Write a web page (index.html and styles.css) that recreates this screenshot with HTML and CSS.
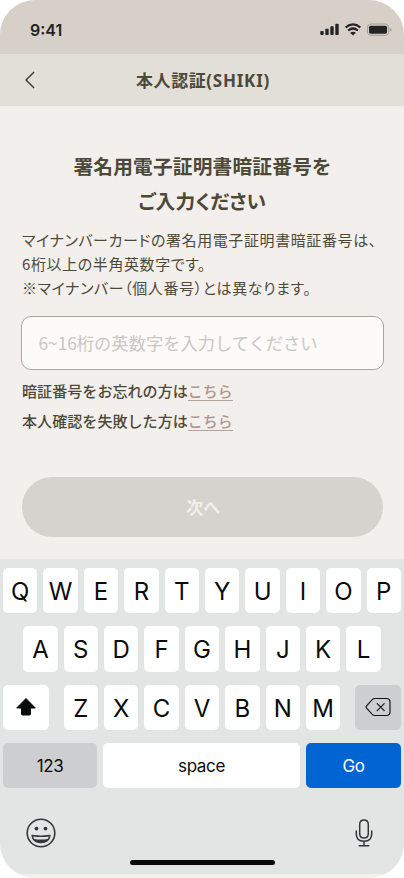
FILE: index.html
```html
<!DOCTYPE html>
<html lang="ja">
<head>
<meta charset="utf-8">
<title>本人認証(SHIKI)</title>
<link rel="stylesheet" href="styles.css">
</head>
<body>
<div class="phone">
  <div class="status">
    <span class="time">9:41</span>
    <svg class="status-icons" width="72" height="14" viewBox="0 0 72 14">
      <g fill="#242424">
        <rect x=".3" y="8" width="3.4" height="4" rx=".8"/>
        <rect x="5.3" y="5.8" width="3.4" height="6.2" rx=".8"/>
        <rect x="10.300" y="3.3" width="3.4" height="8.7" rx=".8"/>
        <rect x="15.300" y=".8" width="3.4" height="11.2" rx=".8"/>
        <path d="M33 8.800q1.700 0 2.900 1L33 12.500 30.100 9.800q1.200-1 2.900-1z"/>
        <rect x="49" y="2.700" width="18" height="8" rx="1.600"/>
      </g>
      <path d="M25.600 4.500q7.400-6.200 14.800 0M28.100 7.500q4.900-4 9.800 0" fill="none" stroke="#242424" stroke-width="2.200"/>
      <rect x="47.500" y="1" width="21" height="11.300" rx="3.200" fill="none" stroke="#a29d99" stroke-width="1"/>
      <path d="M69.700 4.700q1.800.6 1.800 2t-1.800 2z" fill="#a29d99"/>
    </svg>
  </div>
  <header class="nav">
    <svg class="back" width="12" height="18" viewBox="0 0 12 18"><path d="M9.600 1.500 2 9l7.600 7.500" fill="none" stroke="#4d4939" stroke-width="1.700" stroke-linecap="round" stroke-linejoin="round"/></svg>
    <h1>本人認証<span class="latin">(SHIKI)</span></h1>
  </header>
  <main>
    <h2>署名用電子証明書暗証番号を<br>ご入力ください</h2>
    <p class="lead">マイナンバーカードの署名用電子証明書暗証番号は、<br>6桁以上の半角英数字です。<br>※マイナンバー（個人番号）とは異なります。</p>
    <div class="field">6~16桁の英数字を入力してください</div>
    <div class="help">
      <div>暗証番号をお忘れの方は<a>こちら</a></div>
      <div>本人確認を失敗した方は<a>こちら</a></div>
    </div>
    <div class="next">次へ</div>
  </main>
  <section class="keyboard">
    <div class="row"><b>Q</b><b>W</b><b>E</b><b>R</b><b>T</b><b>Y</b><b>U</b><b>I</b><b>O</b><b>P</b></div>
    <div class="row"><b>A</b><b>S</b><b>D</b><b>F</b><b>G</b><b>H</b><b>J</b><b>K</b><b>L</b></div>
    <div class="row spread">
      <div class="key side"><svg width="22" height="20" viewBox="0 0 22 20"><path d="M11 1.500 20.300 11h-4.800v6q0 1-1 1h-7q-1 0-1-1v-6H1.700z" fill="#0a0c0b" stroke="#0a0c0b" stroke-linejoin="round"/></svg></div>
      <div class="row"><b>Z</b><b>X</b><b>C</b><b>V</b><b>B</b><b>N</b><b>M</b></div>
      <div class="key side gray"><svg width="26" height="20" viewBox="0 0 26 20"><path d="M9.500 1.500h12q3.500 0 3.500 3.500v10q0 3.500-3.500 3.500h-12q-1.200 0-2-.8L1.600 11.200q-1-1.200 0-2.400L7.500 2.300q.8-.8 2-.8zM12.200 6.600l7 7m0-7-7 7" fill="none" stroke="#151617" stroke-width="1.200" stroke-linecap="round"/></svg></div>
    </div>
    <div class="row wide"><div class="key num gray">123</div><div class="key space">space</div><div class="key go">Go</div></div>
    <div class="tools">
      <svg width="30" height="30" viewBox="0 0 30 30">
        <circle cx="15" cy="15" r="13.800" fill="none" stroke="#303638" stroke-width="1.600"/>
        <circle cx="10.500" cy="10.600" r="1.900" fill="#303638"/><circle cx="19.500" cy="10.600" r="1.900" fill="#303638"/>
        <path d="M5.800 17.200q9.200 1.800 18.400 0-.6 7.600-9.200 7.600t-9.200-7.600z" fill="#303638" stroke="#303638" stroke-linejoin="round"/>
        <path d="M7.200 18.400q7.800 1.400 15.600 0-.3 1.500-1.100 2.500-6.700 1.300-13.400 0-.8-1-1.100-2.500z" fill="#e2e5e4"/>
      </svg>
      <svg width="18" height="28" viewBox="0 0 18 28"><path d="M9 .9q4.300 0 4.300 4.500v9.200q0 4.500-4.300 4.500t-4.300-4.500V5.400Q4.700.9 9 .9zM1.300 12v3q0 7.200 7.700 7.200t7.700-7.200v-3M9 22.400v4.400M4.200 26.800h9.600" fill="none" stroke="#303638" stroke-width="1.500" stroke-linecap="round"/></svg>
    </div>
    <div class="home"></div>
  </section>
</div>
</body>
</html>
```
FILE: styles.css
```css
* { box-sizing: border-box; }
body { margin: 0; background: #fff; }
.phone {
  width: 404px; height: 878px; overflow: hidden;
  display: flex; flex-direction: column;
  border-radius: 35px; background: #f3efec; color: #4d4939;
  font-family: "Noto Sans CJK JP", sans-serif;
}
.status {
  height: 54px; padding: 5px 12px 0 30px; background: #d7d0c9;
  display: flex; align-items: center; justify-content: space-between;
}
.time { font: 600 16px Inter, sans-serif; color: #242424; }
.nav {
  height: 52px; padding-left: 24px; padding-right: 34px;
  display: flex; align-items: center; background: #e2ded8;
}
.nav h1 { flex: 1; margin: 0; text-align: center; font-size: 17px; font-weight: 700; line-height: 24px; letter-spacing: .6px; }
.latin { font-family: "Noto Sans", sans-serif; font-size: 17px; letter-spacing: .75px; }
main { height: 453px; padding: 42px 21.500px 0 22px; }
h2 { margin: 0 -10px; text-align: center; font-size: 19.7px; line-height: 35px; font-weight: 700; font-feature-settings: "palt"; letter-spacing: .2px; }
.lead { margin: 10px -20px 0 0; font-size: 15px; line-height: 24px; letter-spacing: .6px; font-feature-settings: "palt"; white-space: nowrap; }
.field {
  height: 54px; margin: 16px -1px 0; padding: 0 16.500px; line-height: 51px;
  border: 1px solid #aaa69e; border-radius: 10px; background: #fcfbf9;
  color: #c8c7c4; font-size: 17.270px;
}
.help { height: 60px; margin-top: 6px; font-size: 15.080px; font-weight: 500; line-height: 30px; }
.help a { color: #ae9690; border-bottom: 1px solid #b6a19c; display: inline-block; line-height: 19px; font-size: 14.900px; }
.next { height: 60px; margin-top: 41px; padding-left: 2px; border-radius: 30px; background: #d6d3ce; color: #f3efec; text-align: center; font-size: 17px; font-weight: 700; line-height: 59px; }
.keyboard {
  height: 315px; padding: 9px 3px 0; background: #e2e5e4; color: #0a0c0b;
  font-family: Inter, sans-serif; display: flex; flex-direction: column; gap: 13px;
}
.row { display: flex; justify-content: center; gap: 6px; }
.row b, .key { height: 45.300px; border-radius: 5px; background: #fff; display: flex; align-items: center; justify-content: center; }
.row b { width: 34.400px; font-size: 24px; font-weight: 400; padding: 2px 0 0; }
.spread { justify-content: space-between; }
.key { font-size: 17px; font-weight: 400; letter-spacing: -.35px; }
.side { width: 45.700px; }
.row .gray { background: #cdced0; }
.num { width: 94px; }
.space { flex: 1; }
.row .go { width: 95px; background: #0064d2; color: #fff; }
.tools { display: flex; justify-content: space-between; align-items: center; height: 30px; margin-top: 17px; padding: 0 28px 0 23px; }
.home { width: 145px; height: 5.500px; margin: -1.500px auto 0; border-radius: 3px; background: #0a0c0b; }
```
